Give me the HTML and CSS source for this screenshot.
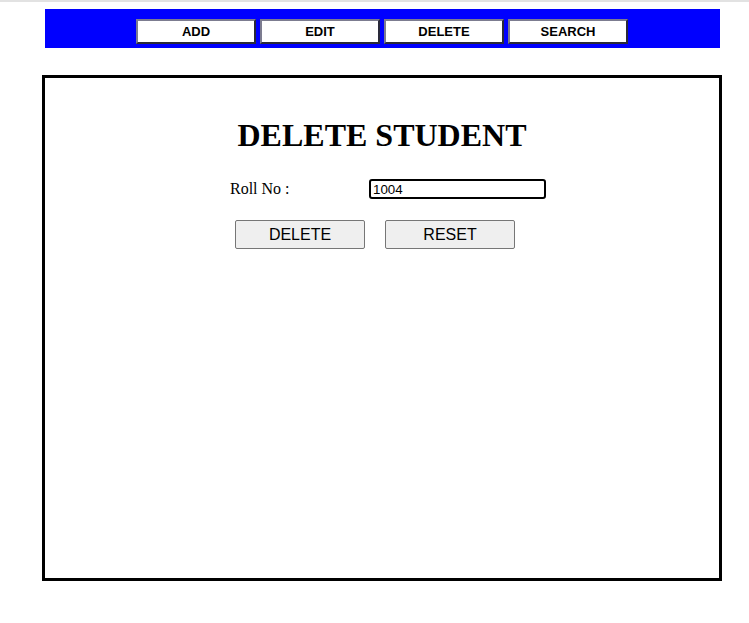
FILE: index.html
```html
<!DOCTYPE html>
<html>
<head>
<meta charset="utf-8">
<title>Delete Student</title>
<link rel="stylesheet" href="styles.css">
</head>
<body>
<div class="topline"></div>
<nav class="nav">
  <button class="nav-btn">ADD</button>
  <button class="nav-btn">EDIT</button>
  <button class="nav-btn">DELETE</button>
  <button class="nav-btn">SEARCH</button>
</nav>
<main class="panel">
  <h1 class="title">DELETE STUDENT</h1>
  <form class="form">
    <div class="row">
      <label class="label" for="roll">Roll No :</label>
      <input class="field" id="roll" type="text" value="1004">
    </div>
    <div class="actions">
      <button type="button" class="act-btn">DELETE</button>
      <button type="reset" class="act-btn">RESET</button>
    </div>
  </form>
</main>
</body>
</html>
```
FILE: styles.css
```css
html, body {
  margin: 0;
  padding: 0;
  background: #fff;
}
body {
  font-family: "Liberation Serif", "Times New Roman", serif;
}
.topline {
  height: 2px;
  background: #e2e2e2;
}
.nav {
  margin: 7px 0 0 45px;
  width: 675px;
  height: 39px;
  box-sizing: border-box;
  padding: 10px 0 0 91px;
  background: #0000ff;
  display: flex;
  justify-content: flex-start;
  align-items: flex-start;
  gap: 4px;
}
.nav-btn {
  width: 120px;
  height: 25px;
  box-sizing: border-box;
  margin: 0;
  padding: 0;
  background: #fff;
  border: 2px solid;
  border-color: #7c7c90 #2a2a3a #2a2a3a #7c7c90;
  font-family: "Liberation Sans", Arial, sans-serif;
  font-weight: bold;
  font-size: 13px;
  color: #000;
}
.panel {
  margin: 27px 0 0 42px;
  width: 680px;
  height: 506px;
  box-sizing: border-box;
  border: 3px solid #000;
  overflow: hidden;
}
.title {
  margin: 39px 0 0;
  font-size: 32px;
  line-height: 37px;
  font-weight: bold;
  text-align: center;
  color: #000;
}
.form {
  margin: 25px 0 0 185px;
}
.row {
  display: grid;
  grid-template-columns: 139px 177px;
  align-items: center;
  height: 20px;
}
.label {
  font-size: 16px;
  color: #000;
}
.field {
  width: 177px;
  height: 20px;
  box-sizing: border-box;
  margin: 0;
  padding: 0 2px;
  border: 2px solid #000;
  border-radius: 3px;
  outline: none;
  font-family: "Liberation Sans", Arial, sans-serif;
  font-size: 13.33px;
  color: #000;
}
.actions {
  display: flex;
  gap: 20px;
  margin: 21px 0 0 5px;
}
.act-btn {
  width: 130px;
  height: 29px;
  box-sizing: border-box;
  margin: 0;
  padding: 0;
  background: #efefef;
  border: 1px solid #767676;
  border-radius: 2px;
  font-family: "Liberation Sans", Arial, sans-serif;
  font-size: 16px;
  color: #000;
}
```
